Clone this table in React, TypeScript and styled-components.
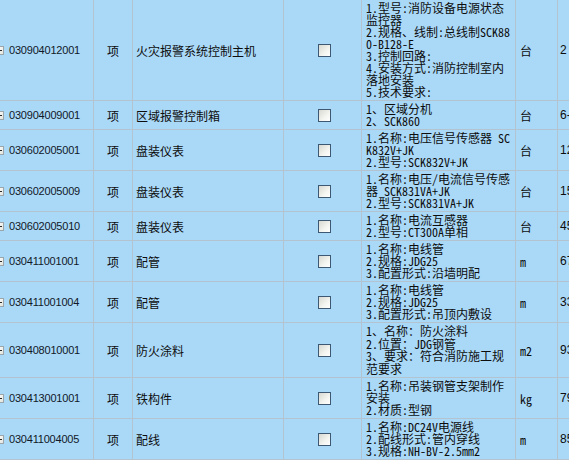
import React from "react";
import styled, { createGlobalStyle } from "styled-components";

const GlobalStyle = createGlobalStyle`
  html, body {
    margin: 0;
    padding: 0;
    overflow: hidden;
    background: #aad9f8;
  }
`;

const Sheet = styled.div`
  width: 569px;
  height: 460px;
  overflow: hidden;
  background: #aad9f8;
`;

const Row = styled.div`
  display: grid;
  grid-template-columns: 94px 39px 151px 78px 154px 42px 80px;
  width: 638px;
`;

const Cell = styled.div`
  box-sizing: border-box;
  border-right: 1px solid #b3c3cf;
  border-bottom: 1px solid #b3c3cf;
  display: flex;
  align-items: center;
  color: #0d0d0d;
  min-width: 0;
  overflow: hidden;
  white-space: nowrap;
`;

const CodeCell = styled(Cell)`
  font: 11px "Liberation Sans", Arial, sans-serif;
  letter-spacing: -0.2px;
  color: #111827;
`;

const IconClip = styled.span`
  width: 4px;
  height: 9px;
  overflow: hidden;
  display: flex;
  justify-content: flex-end;
  flex: none;
  margin-right: 5px;
`;

const ExpandBox = styled.span`
  flex: none;
  width: 9px;
  height: 9px;
  box-sizing: border-box;
  border: 1px solid #9aa6ac;
  background: linear-gradient(135deg, #ffffff, #e4e4de);
  position: relative;
  &::before {
    content: "";
    position: absolute;
    left: 1px;
    right: 1px;
    top: 3px;
    height: 1px;
    background: #2a2a2a;
  }
  &::after {
    content: "";
    position: absolute;
    top: 1px;
    bottom: 1px;
    left: 3px;
    width: 1px;
    background: #2a2a2a;
  }
`;

const UnitCell = styled(Cell)`
  justify-content: center;
  font: 12px "Noto Sans CJK SC", sans-serif;
`;

const NameCell = styled(Cell)`
  padding-left: 3px;
  font: 12px "Noto Sans CJK SC", sans-serif;
`;

const CheckCell = styled(Cell)`
  justify-content: center;
`;

const CheckBox = styled.span`
  width: 13px;
  height: 13px;
  box-sizing: border-box;
  border: 1px solid #3d5873;
  background: linear-gradient(135deg, #d9d9d2 0%, #f4f4f0 60%, #ffffff 100%);
  margin-left: 3px;
`;

const DescCell = styled(Cell)<{ $lh: number }>`
  padding: 2px 4px;
  flex-direction: column;
  align-items: flex-start;
  justify-content: center;
  font-family: "Noto Sans Mono CJK SC", "Noto Sans CJK SC", monospace;
  font-size: 12px;
  line-height: ${(p) => p.$lh}px;
`;

const Line = styled.div`
  height: inherit;
`;

const MeasureCell = styled(Cell)`
  padding-left: 4px;
  font-family: "Noto Sans Mono CJK SC", "Noto Sans CJK SC", monospace;
  font-size: 12px;
`;

const QtyCell = styled(Cell)`
  padding-left: 2px;
  font: 12px "Liberation Sans", Arial, sans-serif;
  border-right: none;
`;

type Item = {
  code: string;
  name: string;
  desc: string[];
  unit: string;
  qty: string;
  lh?: number;
};

const items: Item[] = [
  {
    code: "030904012001",
    name: "火灾报警系统控制主机",
    desc: [
      "1.型号:消防设备电源状态",
      "监控器",
      "2.规格、线制:总线制SCK88",
      "0-B128-E",
      "3.控制回路:",
      "4.安装方式:消防控制室内",
      "落地安装",
      "5.技术要求:",
    ],
    unit: "台",
    qty: "2",
  },
  {
    code: "030904009001",
    name: "区域报警控制箱",
    desc: ["1、区域分机", "2、SCK860"],
    unit: "台",
    qty: "6-",
  },
  {
    code: "030602005001",
    name: "盘装仪表",
    desc: ["1.名称:电压信号传感器 SC", "K832V+JK", "2.型号:SCK832V+JK"],
    unit: "台",
    qty: "12",
  },
  {
    code: "030602005009",
    name: "盘装仪表",
    desc: ["1.名称:电压/电流信号传感", "器 SCK831VA+JK", "2.型号:SCK831VA+JK"],
    unit: "台",
    qty: "15",
  },
  {
    code: "030602005010",
    name: "盘装仪表",
    desc: ["1.名称:电流互感器", "2.型号:CT300A单相"],
    unit: "台",
    qty: "45",
  },
  {
    code: "030411001001",
    name: "配管",
    desc: ["1.名称:电线管", "2.规格:JDG25", "3.配置形式:沿墙明配"],
    unit: "m",
    qty: "67",
  },
  {
    code: "030411001004",
    name: "配管",
    desc: ["1.名称:电线管", "2.规格:JDG25", "3.配置形式:吊顶内敷设"],
    unit: "m",
    qty: "33",
  },
  {
    code: "030408010001",
    name: "防火涂料",
    desc: ["1、名称：防火涂料", "2.位置：JDG钢管", "3、要求：符合消防施工规", "范要求"],
    unit: "m2",
    qty: "93",
    lh: 12.5,
  },
  {
    code: "030413001001",
    name: "铁构件",
    desc: ["1.名称:吊装钢管支架制作", "安装", "2.材质:型钢"],
    unit: "kg",
    qty: "79",
  },
  {
    code: "030411004005",
    name: "配线",
    desc: ["1.名称:DC24V电源线", "2.配线形式:管内穿线", "3.规格:NH-BV-2.5mm2"],
    unit: "m",
    qty: "85",
  },
];

export default function App() {
  return (
    <>
      <GlobalStyle />
      <Sheet>
        {items.map((it) => (
          <Row key={it.code}>
            <CodeCell>
              <IconClip>
                <ExpandBox />
              </IconClip>
              {it.code}
            </CodeCell>
            <UnitCell>项</UnitCell>
            <NameCell>{it.name}</NameCell>
            <CheckCell>
              <CheckBox />
            </CheckCell>
            <DescCell $lh={it.lh ?? 12}>
              {it.desc.map((l, i) => (
                <Line key={i}>{l}</Line>
              ))}
            </DescCell>
            <MeasureCell>{it.unit}</MeasureCell>
            <QtyCell>{it.qty}</QtyCell>
          </Row>
        ))}
      </Sheet>
    </>
  );
}
